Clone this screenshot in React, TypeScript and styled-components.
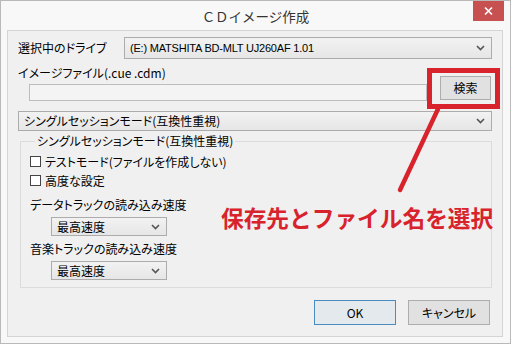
import React from 'react';
import styled, { createGlobalStyle } from 'styled-components';

const GlobalStyle = createGlobalStyle`
    html, body {
        margin: 0;
        padding: 0;
        background: #ffffff;
    }
    body {
        font-family: "Noto Sans CJK JP", "Liberation Sans", sans-serif;
        font-size: 12px;
        font-feature-settings: "palt";
        color: #000;
    }
`;

const Window = styled.div`
    position: relative;
    width: 511px;
    height: 344px;
    box-sizing: border-box;
    border: 1px solid #b9b9b9;
    background: #f8f8f8;
    display: flex;
    flex-direction: column;
    overflow: hidden;
`;

const TitleBar = styled.div`
    position: relative;
    height: 29px;
    display: flex;
    align-items: center;
    justify-content: center;
    font-size: 13.5px;
    font-feature-settings: normal;
    color: #333;
`;

const CloseButton = styled.div`
    position: absolute;
    top: 0;
    right: 6px;
    width: 31px;
    height: 20px;
    background: #c75050;
    display: flex;
    align-items: center;
    justify-content: center;
`;

const Client = styled.div`
    margin: 0 0 0 6px;
    width: 496px;
    height: 307px;
    box-sizing: border-box;
    border: 1px solid #d4d4d4;
    background: #f0f0f0;
    padding: 6px 10px 0 10px;
    display: flex;
    flex-direction: column;
`;

const Row = styled.div`
    display: flex;
    align-items: center;
`;

const Label = styled.span<{ $width?: number }>`
    width: ${p => (p.$width ? `${p.$width}px` : 'auto')};
    flex-shrink: 0;
    line-height: 14px;
    white-space: nowrap;
`;

const SelectBox = styled.div<{ $height: number; $width?: number }>`
    position: relative;
    flex: ${p => (p.$width ? '0 0 auto' : '1')};
    width: ${p => (p.$width ? `${p.$width}px` : 'auto')};
    height: ${p => p.$height}px;
    box-sizing: border-box;
    border: 1px solid #acacac;
    background: linear-gradient(#f2f2f2, #e6e6e6);
    display: flex;
    align-items: center;
    padding: 0 0 0 5px;
    white-space: nowrap;
`;

const SelectText = styled.span<{ $latin?: boolean }>`
    flex: 1;
    font-family: ${p => (p.$latin ? '"Liberation Sans", "Noto Sans CJK JP", sans-serif' : '"Noto Sans CJK JP", sans-serif')};
    font-size: ${p => (p.$latin ? '11px' : '12px')};
    letter-spacing: ${p => (p.$latin ? '-0.2px' : '0')};
    line-height: 14px;
`;

const Chevron = styled.svg`
    width: 9px;
    height: 6px;
    margin-right: 6px;
    flex-shrink: 0;
`;

const FileGrid = styled.div`
    display: grid;
    grid-template-columns: 1fr 51px;
    grid-template-rows: 18px 17px;
    column-gap: 13px;
    margin-top: 7px;
    padding-right: 1px;
`;

const FileLabel = styled.div`
    grid-column: 1;
    grid-row: 1;
    line-height: 14px;
`;

const TextInput = styled.div`
    grid-column: 1;
    grid-row: 2;
    margin-left: 11px;
    box-sizing: border-box;
    border: 1px solid #bdbdbd;
    background: #f4f4f4;
`;

const Button = styled.div<{ $default?: boolean }>`
    box-sizing: border-box;
    border: 1px solid ${p => (p.$default ? '#4a8cc0' : '#adadad')};
    background: ${p => (p.$default ? '#e4e9ee' : '#e1e1e1')};
    display: flex;
    align-items: center;
    justify-content: center;
    line-height: 14px;
`;

const SearchButton = styled(Button)`
    grid-column: 2;
    grid-row: 1 / 3;
    align-self: end;
    height: 24px;
    margin-bottom: 1px;
`;

const ModeRow = styled(Row)`
    margin-top: 10px;
`;

const Group = styled.fieldset`
    margin: 4px 0 0 2px;
    padding: 5px 0 7px 9px;
    border: 1px solid #dcdcdc;
    display: flex;
    flex-direction: column;
    min-width: 0;
`;

const Legend = styled.legend`
    padding: 0 2px;
    margin-left: 5px;
    line-height: 12px;
`;

const CheckRow = styled.label`
    display: flex;
    align-items: center;
    height: 19px;
    gap: 4px;
`;

const CheckBox = styled.span`
    width: 11px;
    height: 11px;
    box-sizing: border-box;
    border: 1px solid #444;
    background: #fff;
`;

const SpeedLabel = styled.div<{ $first?: boolean }>`
    margin-top: ${p => (p.$first ? '8px' : '6px')};
    line-height: 14px;
`;

const SpeedRow = styled(Row)`
    margin-top: 5px;
    padding-left: 21px;
`;

const Footer = styled.div`
    display: flex;
    justify-content: flex-end;
    gap: 12px;
    margin-top: 12px;
    padding-right: 2px;
`;

const DialogButton = styled(Button)`
    width: 82px;
    height: 25px;
`;

const Marker = styled.div`
    position: absolute;
    left: 426px;
    top: 67px;
    width: 73px;
    height: 41px;
    box-sizing: border-box;
    border: 5px solid #d8232c;
`;

const Pointer = styled.svg`
    position: absolute;
    left: 0;
    top: 0;
    width: 511px;
    height: 344px;
    pointer-events: none;
`;

const Caption = styled.div`
    position: absolute;
    left: 220px;
    top: 203px;
    font-family: "Noto Sans CJK JP", sans-serif;
    font-feature-settings: normal;
    font-weight: 700;
    font-size: 22.7px;
    line-height: 28px;
    color: #d8232c;
    white-space: nowrap;
`;

const Arrow = () => (
    <Chevron viewBox="0 0 9 6">
        <polyline points="1,1 4.5,4.5 8,1" fill="none" stroke="#555" strokeWidth="1.6" />
    </Chevron>
);

const Select: React.FC<{ text: string; height: number; width?: number; latin?: boolean }> = ({ text, height, width, latin }) => (
    <SelectBox $height={height} $width={width}>
        <SelectText $latin={latin}>{text}</SelectText>
        <Arrow />
    </SelectBox>
);

const App = () => {
    return (
        <>
            <GlobalStyle />
            <Window>
                <TitleBar>
                    ＣＤイメージ作成
                    <CloseButton>
                        <svg width="9" height="8" viewBox="0 0 9 8">
                            <path d="M1 0.5 L8 7.5 M8 0.5 L1 7.5" stroke="#fff" strokeWidth="1.6" />
                        </svg>
                    </CloseButton>
                </TitleBar>
                <Client>
                    <Row>
                        <Label $width={106}>選択中のドライブ</Label>
                        <Select text="(E:) MATSHITA BD-MLT UJ260AF  1.01" height={22} latin />
                    </Row>
                    <FileGrid>
                        <FileLabel>イメージファイル(.cue .cdm)</FileLabel>
                        <TextInput />
                        <SearchButton>検索</SearchButton>
                    </FileGrid>
                    <ModeRow>
                        <Select text="シングルセッションモード(互換性重視)" height={20} />
                    </ModeRow>
                    <Group>
                        <Legend>シングルセッションモード(互換性重視)</Legend>
                        <CheckRow>
                            <CheckBox />
                            テストモード(ファイルを作成しない)
                        </CheckRow>
                        <CheckRow>
                            <CheckBox />
                            高度な設定
                        </CheckRow>
                        <SpeedLabel $first>データトラックの読み込み速度</SpeedLabel>
                        <SpeedRow>
                            <Select text="最高速度" height={19} width={116} />
                        </SpeedRow>
                        <SpeedLabel>音楽トラックの読み込み速度</SpeedLabel>
                        <SpeedRow>
                            <Select text="最高速度" height={19} width={116} />
                        </SpeedRow>
                    </Group>
                    <Footer>
                        <DialogButton $default>OK</DialogButton>
                        <DialogButton>キャンセル</DialogButton>
                    </Footer>
                </Client>
                <Marker />
                <Pointer viewBox="0 0 511 344">
                    <line x1="437" y1="108" x2="399" y2="189" stroke="#d8232c" strokeWidth="4.5" strokeLinecap="round" />
                </Pointer>
                <Caption>保存先とファイル名を選択</Caption>
            </Window>
        </>
    );
};

export default App;
